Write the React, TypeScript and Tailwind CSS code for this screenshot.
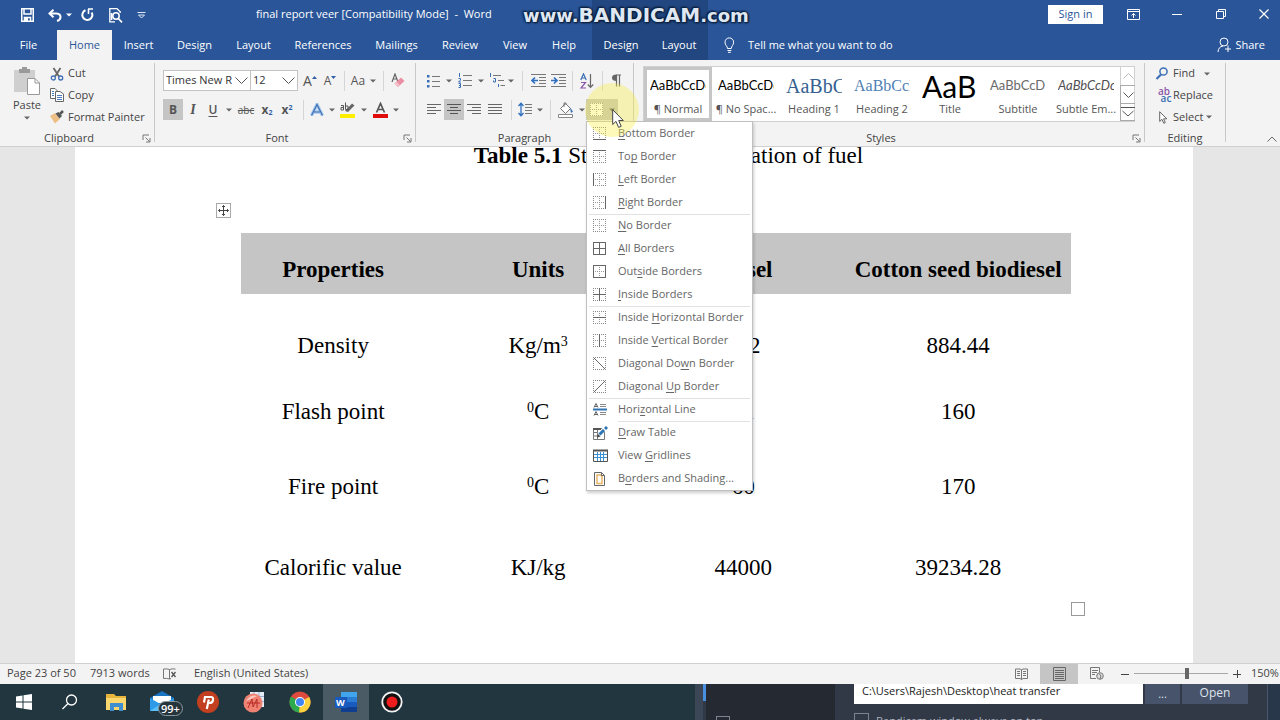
import type { ReactNode } from 'react';

const ui = "font-['Open_Sans','Noto_Sans',sans-serif]";

const TABS = [
  { label: 'File', width: 'w-[57px]' },
  { label: 'Home', width: 'w-[55px]', active: true },
  { label: 'Insert', width: 'w-[53px]' },
  { label: 'Design', width: 'w-[59px]' },
  { label: 'Layout', width: 'w-[59px]' },
  { label: 'References', width: 'w-[80px]' },
  { label: 'Mailings', width: 'w-[67px]' },
  { label: 'Review', width: 'w-[60px]' },
  { label: 'View', width: 'w-[50px]' },
  { label: 'Help', width: 'w-[48px]' },
];

const TABLE_TABS = ['Design', 'Layout'];

const STYLES = [
  { name: '¶ Normal', sample: 'AaBbCcDc', look: "font-['Lato'] text-[13px] text-black", selected: true },
  { name: '¶ No Spac...', sample: 'AaBbCcDc', look: "font-['Lato'] text-[13px] text-black" },
  { name: 'Heading 1', sample: 'AaBbC', look: "font-['Liberation_Serif'] text-[20px] text-[#365f91]" },
  { name: 'Heading 2', sample: 'AaBbCcI', look: "font-['Liberation_Serif'] text-[16px] text-[#4f7fb5]" },
  { name: 'Title', sample: 'AaB', look: "font-['Lato'] text-[30px] text-black" },
  { name: 'Subtitle', sample: 'AaBbCcD', look: "font-['Lato'] text-[13px] text-[#6a6a6a]" },
  { name: 'Subtle Em...', sample: 'AaBbCcDc', look: "font-['Lato'] text-[13px] italic text-[#505050]" },
];

// before / accelerator / after, plus the solid strokes of the icon
const MENU = [
  { text: ['', 'B', 'ottom Border'], solid: 'M0 12.5H13' },
  { text: ['To', 'p', ' Border'], solid: 'M0 0.5H13' },
  { text: ['', 'L', 'eft Border'], solid: 'M0.5 0V13' },
  { text: ['', 'R', 'ight Border'], solid: 'M12.5 0V13' },
  { text: ['', 'N', 'o Border'], solid: '', rule: 'full' },
  { text: ['', 'A', 'll Borders'], solid: 'M0.5 0.5H12.5V12.5H0.5ZM6.5 0.5V12.5M0.5 6.5H12.5' },
  { text: ['Out', 's', 'ide Borders'], solid: 'M0.5 0.5H12.5V12.5H0.5Z' },
  { text: ['', 'I', 'nside Borders'], solid: 'M6.5 0V13M0 6.5H13' },
  { text: ['Inside ', 'H', 'orizontal Border'], solid: 'M0 6.5H13', rule: 'full' },
  { text: ['Inside ', 'V', 'ertical Border'], solid: 'M6.5 0V13' },
  { text: ['Diagonal Do', 'w', 'n Border'], solid: 'M1 1L12 12', diagonal: true },
  { text: ['Diagonal ', 'U', 'p Border'], solid: 'M1 12L12 1', diagonal: true },
  { text: ['Hori', 'z', 'ontal Line'], icon: 'hline', rule: 'full' },
  { text: ['', 'D', 'raw Table'], icon: 'draw', rule: 'inset' },
  { text: ['View ', 'G', 'ridlines'], icon: 'grid' },
  { text: ['B', 'o', 'rders and Shading...'], icon: 'page' },
];

const ROWS = [
  { name: 'Density', unit: <>Kg/m<sup className="text-[14px]">3</sup></>, diesel: '832', cotton: '884.44', height: 'h-[66px]' },
  { name: 'Flash point', unit: <><sup className="text-[14px]">0</sup>C</>, diesel: '51', cotton: '160', height: 'h-[75px]' },
  { name: 'Fire point', unit: <><sup className="text-[14px]">0</sup>C</>, diesel: '60', cotton: '170', height: 'h-[81px]' },
  { name: 'Calorific value', unit: 'KJ/kg', diesel: '44000', cotton: '39234.28', height: 'h-[86px]' },
];

function Icon({ w = 16, h = 16, children }: { w?: number; h?: number; children: ReactNode }) {
  return (
    <svg width={w} height={h} viewBox={`0 0 ${w} ${h}`} fill="none" className="shrink-0" aria-hidden="true">
      {children}
    </svg>
  );
}

function Caret() {
  return (
    <Icon w={6} h={4}>
      <path d="M0 0.5H6L3 3.5Z" fill="#666" />
    </Icon>
  );
}

function Tool({ label, width = 'w-5', active, children }: { label: string; width?: string; active?: boolean; children: ReactNode }) {
  return (
    <button
      aria-label={label}
      className={`flex h-[21px] shrink-0 items-center justify-center leading-none text-[#555] ${width} ${active ? 'bg-[#c5c5c5]' : ''}`}
    >
      {children}
    </button>
  );
}

function Sep({ width = 'w-2' }: { width?: string }) {
  return (
    <div className={`flex h-5 shrink-0 justify-center ${width}`}>
      <div className="w-px bg-[#d5d5d5]" />
    </div>
  );
}

function Group({ title, width, launcher, children }: { title: string; width: string; launcher?: boolean; children: ReactNode }) {
  return (
    <section className={`flex shrink-0 flex-col ${width}`}>
      <div className="flex flex-1">
        <div className="flex min-w-0 flex-1 flex-col">
          <div className="flex-1">{children}</div>
          <div className="flex h-4 items-center">
            <span className="flex-1 text-center leading-4 text-[#444]">{title}</span>
            {launcher && (
              <button aria-label={`${title} settings`} className="flex w-4 justify-center">
                <Icon w={9} h={9}>
                  <path d="M1 6V1H7M3.5 3.5L7.5 7.5M8 4V8H4" stroke="#777" />
                </Icon>
              </button>
            )}
          </div>
        </div>
        <div className="mt-[3px] mb-1 w-px bg-[#c8c8c8]" />
      </div>
    </section>
  );
}

function MenuIcon({ item }: { item: (typeof MENU)[number] }) {
  if (item.icon === 'hline') {
    return (
      <Icon w={14} h={13}>
        <path d="M0 6.5H14" stroke="#2e75b6" strokeWidth="2" />
        <path d="M1 4.5L3 0.5L5 4.5M2 3.5H4M1 12.5L3 8.5L5 12.5M2 11.5H4" stroke="#666" />
        <path d="M7 1.5H13M7 3.5H13M7 9.5H13M7 11.5H13" stroke="#888" />
      </Icon>
    );
  }
  if (item.icon === 'draw') {
    return (
      <Icon w={15} h={14}>
        <path d="M0.5 2.5H11.5V13.5H0.5ZM0.5 6.5H6M4.5 3V13M0.5 10H4" stroke="#777" />
        <path d="M0 3H8" stroke="#555" strokeWidth="2" />
        <path d="M6 8.5L13 1.5" stroke="#fff" strokeWidth="4" />
        <path d="M6.5 8.5L11 4" stroke="#2e75b6" strokeWidth="3" />
        <path d="M12 3L14 1" stroke="#2e75b6" strokeWidth="3" />
        <path d="M4 11.5L5 8L7.5 10.5Z" fill="#444" />
      </Icon>
    );
  }
  if (item.icon === 'grid') {
    return (
      <Icon w={15} h={13}>
        <path d="M4.5 3V12M7.5 3V12M10.5 3V12M1 5.5H14M1 8.5H14" stroke="#3a90d4" />
        <path d="M0.5 1.5H14.5V12.5H0.5Z" stroke="#555" />
        <path d="M0 1.5H15" stroke="#555" strokeWidth="2" />
      </Icon>
    );
  }
  if (item.icon === 'page') {
    return (
      <Icon w={13} h={14}>
        <path d="M1.5 0.5H8.5L11.5 3.5V13.5H1.5Z" fill="#fff" stroke="#666" />
        <path d="M4 3H7.5L9 4.5V11.5H4Z" stroke="#e8b565" strokeWidth="1.5" />
        <path d="M8.5 0.5V3.5H11.5" stroke="#666" />
      </Icon>
    );
  }
  return (
    <Icon w={13} h={13}>
      <path d="M0 0.5H13M0 12.5H13M0.5 0V13M12.5 0V13" stroke="#888" strokeDasharray="1 1" />
      {!item.diagonal && <path d="M6.5 0V13M0 6.5H13" stroke="#999" strokeDasharray="1 1" />}
      <path d={item.solid} stroke="#666" />
    </Icon>
  );
}

function BordersMenu() {
  return (
    <ul role="menu" className="absolute top-[22px] left-0 z-20 w-[167px] border border-[#c0c0c0] bg-white shadow-[1px_2px_3px_rgba(0,0,0,0.2)]">
      {MENU.map(item => (
        <li key={item.text.join('')} role="none" className="relative">
          {item.rule && <div className={`absolute top-0 right-0.5 h-px bg-[#e1e1e1] ${item.rule === 'inset' ? 'left-[31px]' : 'left-0.5'}`} />}
          <button role="menuitem" className="flex h-[23px] w-full items-center pl-[6px] text-left whitespace-nowrap text-[#666]">
            <span className="flex w-[25px]">
              <MenuIcon item={item} />
            </span>
            <span>
              {item.text[0]}
              <span className="underline underline-offset-2">{item.text[1]}</span>
              {item.text[2]}
            </span>
          </button>
        </li>
      ))}
    </ul>
  );
}

function Pointer() {
  return (
    <>
      <div className="pointer-events-none absolute -top-4 -left-px z-30 h-[54px] w-[54px] rounded-full bg-[#f5ee3c]/35" />
      <svg width="14" height="20" viewBox="0 0 14 20" className="pointer-events-none absolute top-[10px] left-[26px] z-40" aria-hidden="true">
        <path d="M0.7 0.7V15.5L4 12.4L6.6 18.4L9.2 17.3L6.7 11.5H11.3Z" fill="#fff" stroke="#444" />
      </svg>
    </>
  );
}

function TitleBar() {
  return (
    <div className="relative z-10 flex h-[30px] items-center text-white">
      <div className="flex w-[256px] items-center pl-[21px]">
        <button aria-label="Save" className="w-[27px]">
          <Icon w={13} h={14}>
            <path d="M0.75 0.75H12.25V13.25H0.75Z" stroke="#fff" strokeWidth="1.5" />
            <path d="M3 1V6H10V1M3.5 13V9.5H9.5V13" stroke="#fff" strokeWidth="1.5" />
            <path d="M4 10H7V13H4Z" fill="#fff" />
          </Icon>
        </button>
        <button aria-label="Undo" className="flex w-[33px] items-center gap-1">
          <Icon w={14} h={13}>
            <path d="M1.5 4.5H8.5Q12.5 4.8 12.5 8Q12.5 11 9 12" stroke="#fff" strokeWidth="2" />
            <path d="M5.5 0.8L1.5 4.5L5.5 8.2" stroke="#fff" strokeWidth="2" />
          </Icon>
          <Icon w={6} h={4}>
            <path d="M0 0.5H6L3 3.5Z" fill="#fff" />
          </Icon>
        </button>
        <button aria-label="Redo" className="w-[28px]">
          <Icon w={13} h={14}>
            <path d="M4.5 2.3A5 5 0 1 0 10.7 4.5" stroke="#fff" strokeWidth="2" />
            <path d="M7 1H12M7.5 1V6" stroke="#fff" strokeWidth="1.6" />
          </Icon>
        </button>
        <button aria-label="Print preview" className="w-[28px]">
          <Icon w={14} h={15}>
            <path d="M11.2 5V3.8L8 0.7H0.8V13.8H6" stroke="#fff" strokeWidth="1.3" />
            <circle cx="7" cy="8" r="3.2" stroke="#fff" strokeWidth="1.5" />
            <path d="M9.3 10.5L13 14.3M2.5 5V12" stroke="#fff" strokeWidth="1.7" />
          </Icon>
        </button>
        <button aria-label="Customize toolbar">
          <Icon w={9} h={7}>
            <path d="M0.5 0.5H8.5M1.5 3L4.5 6L7.5 3Z" stroke="#dfe8f5" />
          </Icon>
        </button>
      </div>
      <h1 className="w-[267px] pb-0.5 text-[11px] whitespace-pre">final report veer [Compatibility Mode]  -  Word</h1>
      <div className="flex flex-1">
        <p className="font-['DejaVu_Sans'] text-[18px] leading-[28px] font-bold whitespace-nowrap text-[#dfe8f2] [text-shadow:0_0_2px_#0a1c38,0_0_3px_#0a1c38,1px_1px_2px_#0a1c38,-1px_-1px_2px_#0a1c38]">
          www.<span className="text-[20px]">BANDICAM</span>.com
        </p>
      </div>
      <button className="mb-0.5 h-[19px] w-[55px] bg-white text-[#2b579a]">Sign in</button>
      <div className="flex items-center pb-0.5 pl-2">
        <button aria-label="Ribbon display options" className="flex w-11 justify-center">
          <Icon w={13} h={11}>
            <path d="M0.5 0.5H12.5V10.5H0.5ZM0.5 2.5H12.5M6.5 9V4.5M4.5 6.5L6.5 4.5L8.5 6.5" stroke="#fff" />
          </Icon>
        </button>
        <button aria-label="Minimize" className="flex w-11 justify-center">
          <Icon w={10} h={10}>
            <path d="M0 5.5H10" stroke="#fff" />
          </Icon>
        </button>
        <button aria-label="Restore" className="flex w-11 justify-center">
          <Icon w={10} h={10}>
            <path d="M0.5 2.5H7.5V9.5H0.5ZM2.5 2.5V0.5H9.5V7.5H7.5" stroke="#fff" />
          </Icon>
        </button>
        <button aria-label="Close" className="flex w-[37px] justify-end pr-[11px]">
          <Icon w={10} h={10}>
            <path d="M0.5 0.5L9.5 9.5M9.5 0.5L0.5 9.5" stroke="#fff" strokeWidth="1.2" />
          </Icon>
        </button>
      </div>
    </div>
  );
}

function TabRow() {
  return (
    <nav className="flex h-[30px] items-stretch text-white">
      <div className="flex pr-1">
        {TABS.map(tab => (
          <button
            key={tab.label}
            className={`${tab.width} ${tab.active ? 'bg-[#f3f3f3] text-[#2b579a]' : ''}`}
          >
            {tab.label}
          </button>
        ))}
      </div>
      <div className="-mt-[30px] flex bg-[#224780] pt-[30px]">
        {TABLE_TABS.map(tab => (
          <button key={tab} className="w-[58px]">
            {tab}
          </button>
        ))}
      </div>
      <button className="flex items-center gap-3 pl-[15px]">
        <Icon w={13} h={16}>
          <path d="M4.5 11.5C4.5 9 2 8.5 2 5.2A4.3 4.3 0 0 1 10.6 5.2C10.6 8.5 8.3 9 8.3 11.5ZM4.5 13.5H8.3M5 15.3H7.8" stroke="#fff" />
        </Icon>
        <span>Tell me what you want to do</span>
      </button>
      <button className="ml-auto flex items-center gap-[3px] pr-[15px]">
        <Icon w={15} h={16}>
          <circle cx="7" cy="5" r="4" stroke="#fff" />
          <path d="M1 15Q1.5 9.5 6 9M11 8.5V15M8 12H14" stroke="#fff" />
        </Icon>
        <span>Share</span>
      </button>
    </nav>
  );
}

function ClipboardGroup() {
  return (
    <Group title="Clipboard" width="w-[155px]" launcher>
      <div className="flex pt-[3px]">
        <button className="flex w-[50px] flex-col items-center pt-1 pl-1 text-[#444]">
          <Icon w={28} h={28}>
            <path d="M1 3H22V25H1Z" fill="#cfcfcf" />
            <path d="M6 2H17V6H6ZM9 0H14V3H9Z" fill="#9a9a9a" />
            <path d="M14.5 11.5H22L26.5 16V27.5H14.5Z" fill="#fff" stroke="#999" />
            <path d="M22 11.5V16H26.5" stroke="#999" />
          </Icon>
          <span className="leading-[19px]">Paste</span>
          <span className="flex h-2 items-center"><Caret /></span>
        </button>
        <div className="flex flex-col text-[#444]">
          <button className="flex h-[21px] items-center gap-1">
            <Icon w={14} h={14}>
              <path d="M3.5 1L9 9.5M10.5 1L5 9.5" stroke="#666" strokeWidth="1.8" />
              <circle cx="3.3" cy="11" r="2" stroke="#3f6fb5" strokeWidth="1.3" />
              <circle cx="10.7" cy="11" r="2" stroke="#3f6fb5" strokeWidth="1.3" />
            </Icon>
            Cut
          </button>
          <button className="flex h-[22px] items-center gap-1">
            <Icon w={14} h={14}>
              <path d="M0.5 0.5H5L7.5 3V10.5H0.5Z" fill="#fff" stroke="#666" />
              <path d="M5.5 3.5H10L13.5 6V13.5H5.5Z" fill="#fff" stroke="#666" />
              <path d="M2 3.5H4M2 5.5H4M2 7.5H4M7 7.5H12M7 9.5H12M7 11.5H12" stroke="#4a7abf" />
            </Icon>
            Copy
          </button>
          <button className="flex h-[22px] items-center gap-1 whitespace-nowrap">
            <Icon w={14} h={14}>
              <path d="M0 6L5 3L10 9L5 13.5Z" fill="#ecc084" />
              <path d="M5.5 3.5L9.5 8.5L12 6L8.5 2Z" fill="#555" />
              <path d="M10 4L13 1" stroke="#555" strokeWidth="2.5" />
            </Icon>
            Format Painter
          </button>
        </div>
      </div>
    </Group>
  );
}

function DropBox({ label, value, width }: { label: string; value: string; width: string }) {
  return (
    <div className={`flex h-[21px] items-center border border-[#c3c3c3] bg-white ${width}`}>
      <select aria-label={label} className="min-w-0 flex-1 appearance-none overflow-hidden pl-0.5 text-clip text-[#333] outline-none">
        <option>{value}</option>
      </select>
      <span className="flex w-[18px] justify-center">
        <Icon w={13} h={7}>
          <path d="M0.5 0.5L6.5 6.5L12.5 0.5" stroke="#555" />
        </Icon>
      </span>
    </div>
  );
}

function FontGroup() {
  return (
    <Group title="Font" width="w-[261px]" launcher>
      <div className="flex flex-col gap-2 pt-[10px] pl-2">
        <div className="flex items-center">
          <DropBox label="Font" value="Times New Roman" width="w-[88px]" />
          <div className="mr-0.5 -ml-px">
            <DropBox label="Font size" value="12" width="w-[48px]" />
          </div>
          <Tool label="Grow font">
            <span className="text-[14px]">A</span>
            <Icon w={5} h={12}><path d="M0 4L2.5 1L5 4Z" fill="#2e5fa8" /></Icon>
          </Tool>
          <Tool label="Shrink font">
            <span className="text-[12px]">A</span>
            <Icon w={5} h={12}><path d="M0 1L2.5 4L5 1Z" fill="#2e5fa8" /></Icon>
          </Tool>
          <Sep />
          <Tool label="Change case"><span className="text-[12px]">Aa</span></Tool>
          <Tool label="Change case options" width="w-[10px]"><Caret /></Tool>
          <Sep width="w-[10px]" />
          <Tool label="Clear formatting">
            <Icon w={14} h={15}>
              <path d="M1 9L4 1L7 9M2 6H6" stroke="#666" strokeWidth="1.2" />
              <path d="M3.5 10.5L10 4.5L13.5 8L7 14Z" fill="#ea8fa3" />
              <path d="M3.5 10.5L5.5 8.6L9 12.2L7 14Z" fill="#f5bfca" />
            </Icon>
          </Tool>
        </div>
        <div className="flex items-center">
          <Tool label="Bold" active><span className="text-[12px] font-bold">B</span></Tool>
          <Tool label="Italic"><span className="font-['Liberation_Serif'] text-[14px] font-bold italic">I</span></Tool>
          <Tool label="Underline"><span className="text-[12px] font-semibold underline underline-offset-2">U</span></Tool>
          <Tool label="Underline options" width="w-3"><Caret /></Tool>
          <Tool label="Strikethrough" width="w-[22px]"><span className="text-[10px] line-through">abc</span></Tool>
          <Tool label="Subscript"><span className="text-[12px] font-bold">x<sub className="text-[7px] text-[#2e5fa8]">2</sub></span></Tool>
          <Tool label="Superscript"><span className="text-[12px] font-bold">x<sup className="text-[7px] text-[#2e5fa8]">2</sup></span></Tool>
          <Sep width="w-3" />
          <Tool label="Text effects" width="w-4">
            <Icon w={14} h={14}>
              <path d="M1.5 12.5L7 1.5L12.5 12.5M4 9H10" stroke="#a9c8ec" strokeWidth="3.4" />
              <path d="M1.5 12.5L7 1.5L12.5 12.5M4 9H10" stroke="#3a6fb5" strokeWidth="1.2" />
            </Icon>
          </Tool>
          <Tool label="Text effect options" width="w-[14px]"><Caret /></Tool>
          <Tool label="Highlight" width="w-[18px]">
            <Icon w={16} h={16}>
              <path d="M5 9L12 1.5L14.5 3.5L8 10Z" fill="#666" />
              <path d="M0 12H15V16H0Z" fill="#ffee00" />
              <path d="M1 3.5H3.5V8H1V5.5H3.5M5.5 0.5V7.5H8V4H5.5" stroke="#555" />
            </Icon>
          </Tool>
          <Tool label="Highlight color" width="w-[14px]"><Caret /></Tool>
          <Tool label="Font color" width="w-[18px]">
            <Icon w={15} h={16}>
              <path d="M3.5 10.5L7.5 1.5L11.5 10.5M5 7.5H10" stroke="#555" strokeWidth="1.7" />
              <path d="M0 12H15V16H0Z" fill="#e00b0b" />
            </Icon>
          </Tool>
          <Tool label="Font color options" width="w-[14px]"><Caret /></Tool>
        </div>
      </div>
    </Group>
  );
}

function ParagraphGroup() {
  return (
    <Group title="Paragraph" width="w-[218px]">
      <div className="flex flex-col gap-2 pt-[10px] pl-2">
        <div className="flex items-center">
          <Tool label="Bullets" width="w-[18px]">
            <Icon w={13} h={14}>
              <path d="M0 1H2.5V3.5H0ZM0 6H2.5V8.5H0ZM0 11H2.5V13.5H0Z" fill="#3a6fb5" />
              <path d="M5 2.5H13M5 7.5H13M5 12.5H13" stroke="#777" />
            </Icon>
          </Tool>
          <Tool label="Bullet options" width="w-[14px]"><Caret /></Tool>
          <Tool label="Numbering" width="w-[18px]">
            <Icon w={14} h={15}>
              <path d="M1.5 0V4M0.5 5.5H2.5V7L0.5 9H3M0.5 10.5H2.5V14.5H0.5M1 12.5H2.5" stroke="#3a6fb5" />
              <path d="M5 2.5H14M5 7.5H14M5 12.5H14" stroke="#777" />
            </Icon>
          </Tool>
          <Tool label="Numbering options" width="w-[14px]"><Caret /></Tool>
          <Tool label="Multilevel list" width="w-[18px]">
            <Icon w={16} h={15}>
              <path d="M1.5 0V4M4.5 5.5H6.5V9H4.5V7.5M9.5 11V14" stroke="#3a6fb5" />
              <path d="M4 2.5H12M9 7.5H15M11.5 12.5H16" stroke="#777" />
            </Icon>
          </Tool>
          <Tool label="Multilevel options" width="w-[10px]"><Caret /></Tool>
          <Sep width="w-3" />
          <Tool label="Decrease indent">
            <Icon w={15} h={13}>
              <path d="M0 0.5H15M8 3.5H15M8 6.5H15M8 9.5H15M0 12.5H15" stroke="#777" />
              <path d="M1 6.5H7M4 3.5L1 6.5L4 9.5" stroke="#2e6fc0" strokeWidth="1.7" />
            </Icon>
          </Tool>
          <Tool label="Increase indent">
            <Icon w={15} h={13}>
              <path d="M0 0.5H15M8 3.5H15M8 6.5H15M8 9.5H15M0 12.5H15" stroke="#777" />
              <path d="M0 6.5H6M3 3.5L6 6.5L3 9.5" stroke="#2e6fc0" strokeWidth="1.7" />
            </Icon>
          </Tool>
          <Sep />
          <Tool label="Sort" width="w-[22px]">
            <Icon w={14} h={16}>
              <path d="M0.8 7L3.5 0.8L6.2 7M1.5 5H5.5" stroke="#3a6fb5" strokeWidth="1.2" />
              <path d="M1 9.5H5.5L1 15H6" stroke="#8a57a8" strokeWidth="1.2" />
              <path d="M10.5 1V14M7.8 11.5L10.5 14.3L13.2 11.5" stroke="#666" strokeWidth="1.2" />
            </Icon>
          </Tool>
          <Sep />
          <Tool label="Show formatting marks">
            <Icon w={11} h={13}>
              <path d="M5 1H10M5.5 1V12.5M8.5 1V12.5" stroke="#666" strokeWidth="1.2" />
              <path d="M5.5 0.5Q1 0.5 1 3.7Q1 7 5.5 7Z" fill="#666" />
            </Icon>
          </Tool>
        </div>
        <div className="flex items-center">
          <Tool label="Align left">
            <Icon w={14} h={11}><path d="M0 0.5H14M0 3.5H9M0 6.5H14M0 9.5H9" stroke="#666" /></Icon>
          </Tool>
          <Tool label="Center" active>
            <Icon w={14} h={11}><path d="M0 0.5H14M3 3.5H11M0 6.5H14M3 9.5H11" stroke="#555" /></Icon>
          </Tool>
          <Tool label="Align right">
            <Icon w={14} h={11}><path d="M0 0.5H14M5 3.5H14M0 6.5H14M5 9.5H14" stroke="#666" /></Icon>
          </Tool>
          <Tool label="Justify" width="w-[22px]">
            <Icon w={14} h={11}><path d="M0 0.5H14M0 3.5H14M0 6.5H14M0 9.5H14" stroke="#666" /></Icon>
          </Tool>
          <Sep width="w-[10px]" />
          <Tool label="Line spacing" width="w-[18px]">
            <Icon w={14} h={15}>
              <path d="M3 1.5V13.5M0.5 4L3 1.2L5.5 4M0.5 11L3 13.8L5.5 11" stroke="#2e6fc0" strokeWidth="1.3" />
              <path d="M7 2.5H14M7 5.5H14M7 8.5H14M7 11.5H14" stroke="#777" />
            </Icon>
          </Tool>
          <Tool label="Line spacing options" width="w-[11px]"><Caret /></Tool>
          <Sep width="w-[10px]" />
          <Tool label="Shading" width="w-[22px]">
            <Icon w={16} h={16}>
              <path d="M2.5 6.5L7.5 1.5L12.5 6.5L7.5 11.5Z" fill="#fff" stroke="#777" />
              <path d="M6 5V1H8V3" stroke="#777" />
              <path d="M12 5.5L15 9.5L13 11Z" fill="#3a6fb5" />
              <path d="M0.5 12.5H14.5V15.5H0.5Z" fill="#fff" stroke="#888" />
            </Icon>
          </Tool>
          <Tool label="Shading options" width="w-[9px]"><Caret /></Tool>
          <div className="relative flex">
            <Tool label="Borders" active>
              <Icon w={13} h={13}>
                <path d="M0 0H13V13H0Z" fill="#fff" />
                <path d="M0 0.5H13M0 6.5H13M0 12.5H13M0.5 0V13M6.5 0V13M12.5 0V13" stroke="#999" strokeDasharray="1 1" />
              </Icon>
            </Tool>
            <Tool label="Border options" width="w-3" active><Caret /></Tool>
            <BordersMenu />
            <Pointer />
          </div>
        </div>
      </div>
    </Group>
  );
}

function StylesGroup() {
  return (
    <Group title="Styles" width="w-[511px]" launcher>
      <div className="px-[9px] pt-[6px]">
        <div className="flex h-[56px] border border-[#d0d0d0] bg-white">
          {STYLES.map(style => (
            <button
              key={style.name}
              className={`flex w-[68px] shrink-0 flex-col items-center border-[3px] ${style.selected ? 'border-[#c6c6c6]' : 'border-transparent'}`}
            >
              <span className={`flex h-[31px] w-[56px] items-center overflow-hidden leading-none whitespace-nowrap ${style.look}`}>{style.sample}</span>
              <span className="h-[16px] leading-[16px] whitespace-nowrap text-[#555]">{style.name}</span>
            </button>
          ))}
          <div className="flex flex-1 flex-col">
            <button aria-label="Previous styles" className="flex h-[18px] items-center justify-center border-l border-[#d0d0d0]">
              <Icon w={11} h={6}><path d="M0.5 5.5L5.5 0.5L10.5 5.5" stroke="#bbb" /></Icon>
            </button>
            <button aria-label="Next styles" className="flex h-[19px] items-center justify-center border border-r-0 border-[#aaa]">
              <Icon w={11} h={6}><path d="M0.5 0.5L5.5 5.5L10.5 0.5" stroke="#555" /></Icon>
            </button>
            <button aria-label="More styles" className="flex flex-1 flex-col items-center justify-center gap-1 border border-t-0 border-r-0 border-[#aaa]">
              <Icon w={14} h={10}><path d="M0 0.5H14M1.5 4L7 9L12.5 4" stroke="#555" /></Icon>
            </button>
          </div>
        </div>
      </div>
    </Group>
  );
}

function EditingGroup() {
  return (
    <Group title="Editing" width="w-[81px]">
      <div className="flex flex-col pt-[3px] pl-[10px] text-[#444]">
        <button className="flex h-[21px] items-center">
          <span className="w-[18px]">
            <Icon w={14} h={13}>
              <circle cx="8.5" cy="4.5" r="3.6" stroke="#3a6fb5" strokeWidth="1.5" />
              <path d="M6 7.5L1.5 12" stroke="#3a6fb5" strokeWidth="2.2" />
            </Icon>
          </span>
          Find
          <span className="pl-[9px]"><Caret /></span>
        </button>
        <button className="flex h-[22px] items-center">
          <span className="flex w-[18px] flex-col text-[10px] leading-[7px] font-semibold">
            <span className="text-[#8a57a8]">ab</span>
            <span className="pl-1 text-[#3a6fb5]">ac</span>
          </span>
          Replace
        </button>
        <button className="flex h-[22px] items-center">
          <span className="w-[18px] pl-1">
            <Icon w={9} h={13}>
              <path d="M0.7 0.7V10.5L3 8.3L4.8 12.3L6.3 11.6L4.6 7.8H7.8Z" fill="#fff" stroke="#666" />
            </Icon>
          </span>
          Select
          <span className="pl-[3px]"><Caret /></span>
        </button>
      </div>
    </Group>
  );
}

function Document() {
  return (
    <main className="flex-1 overflow-hidden bg-[#e6e6e6] pr-[87px] pl-[75px] font-['Liberation_Serif','Times_New_Roman',serif] text-[23px] leading-[28px] text-black">
      <div className="h-full bg-white pr-[108px] pl-[141px]">
        <p className="h-[56px] pl-[36px] text-center leading-[18px] whitespace-nowrap">
          <b>Table 5.1</b> Standard &amp; specification of fuel
        </p>
        <button aria-label="Move table" className="flex h-[15px] w-[15px] items-center justify-center border border-[#aaa] bg-white">
          <Icon w={11} h={11}>
            <path d="M5.5 0.5V10.5M0.5 5.5H10.5M4 2L5.5 0.5L7 2M4 9L5.5 10.5L7 9M2 4L0.5 5.5L2 7M9 4L10.5 5.5L9 7" stroke="#444" />
          </Icon>
        </button>
        <div className="pt-[15px] pr-[14px] pl-[25px]">
          <table className="w-full table-fixed border-collapse text-center">
            <colgroup>
              <col className="w-[22.2%]" />
              <col className="w-[27.2%]" />
              <col className="w-[22.2%]" />
              <col />
            </colgroup>
            <thead className="bg-[#c5c5c5]">
              <tr className="h-[61px] align-top">
                <th className="pt-[23px]">Properties</th>
                <th className="pt-[23px]">Units</th>
                <th className="pt-[23px]">Diesel</th>
                <th className="pt-[23px] pl-2.5 whitespace-nowrap">Cotton seed biodiesel</th>
              </tr>
            </thead>
            <tbody>
              {ROWS.map(row => (
                <tr key={row.name} className={`align-top ${row.height}`}>
                  <td className="pt-[38px]">{row.name}</td>
                  <td className="pt-[38px]">{row.unit}</td>
                  <td className="pt-[38px]">{row.diesel}</td>
                  <td className="pt-[38px] pl-2.5">{row.cotton}</td>
                </tr>
              ))}
            </tbody>
          </table>
        </div>
        <div className="flex justify-end">
          <button aria-label="Resize table" className="h-[14px] w-[14px] border border-[#999] bg-white" />
        </div>
      </div>
    </main>
  );
}

function StatusBar() {
  return (
    <footer className="flex h-[21px] shrink-0 items-center border-t border-[#d0d0d0] bg-[#f3f3f3] pb-px text-[11px] text-[#444]">
      <span className="w-[90px] pl-[7px]">Page 23 of 50</span>
      <span className="w-[73px]">7913 words</span>
      <button aria-label="Proofing" className="w-[31px]">
        <Icon w={14} h={12}>
          <path d="M6.5 1.5Q4 0.5 0.5 1V10.5Q4 10 6.5 11ZM6.5 1.5Q9 0.5 12.5 1M6.5 11L8 10.5" stroke="#777" />
          <path d="M8.5 4L12.5 9M12.5 4L8.5 9" stroke="#555" strokeWidth="1.3" />
        </Icon>
      </button>
      <span>English (United States)</span>
      <div className="ml-auto flex h-full items-center">
        <button aria-label="Read mode" className="flex w-[38px] justify-center">
          <Icon w={13} h={12}>
            <path d="M6.5 1.5V11.5M0.5 1H5L6.5 2L8 1H12.5V10.5H8L6.5 11.5L5 10.5H0.5ZM2 3.5H5M2 5.5H5M2 7.5H5M8 3.5H11M8 5.5H11M8 7.5H11" stroke="#777" />
          </Icon>
        </button>
        <button aria-label="Print layout" className="flex h-[20px] w-[38px] items-center justify-center bg-[#c5c5c5]">
          <Icon w={13} h={14}>
            <path d="M0.5 0.5H12.5V13.5H0.5ZM2 3.5H11M2 5.5H11M2 7.5H11M2 9.5H11M2 11.5H11" stroke="#666" />
          </Icon>
        </button>
        <button aria-label="Web layout" className="flex w-[38px] justify-center">
          <Icon w={14} h={13}>
            <path d="M6 11.5H0.5V0.5H9.5V5M2 3.5H8M2 5.5H7M2 7.5H5" stroke="#777" />
            <circle cx="10" cy="9" r="3.3" fill="#ddd" stroke="#777" />
            <path d="M9 6.5L11 9L10 12" stroke="#777" />
          </Icon>
        </button>
        <button aria-label="Zoom out" className="flex w-[18px] justify-center">
          <Icon w={8} h={8}><path d="M0 4.5H8" stroke="#444" /></Icon>
        </button>
        <input
          type="range"
          aria-label="Zoom"
          min={10}
          max={500}
          defaultValue={287}
          className="h-3 w-[94px] appearance-none bg-[linear-gradient(#a8a8a8,#a8a8a8)] bg-[length:100%_1px] bg-center bg-no-repeat [&::-webkit-slider-thumb]:h-[11px] [&::-webkit-slider-thumb]:w-1 [&::-webkit-slider-thumb]:appearance-none [&::-webkit-slider-thumb]:bg-[#666]"
        />
        <button aria-label="Zoom in" className="flex w-[17px] justify-center">
          <Icon w={8} h={8}><path d="M0 4.5H8M4.5 0V8" stroke="#444" /></Icon>
        </button>
        <span className="w-[35px] pl-[6px] whitespace-nowrap">150%</span>
      </div>
    </footer>
  );
}

function TaskButton({ label, active, children }: { label: string; active?: boolean; children: ReactNode }) {
  return (
    <button aria-label={label} className={`flex h-full w-[46px] shrink-0 items-center justify-center ${active ? 'bg-[#4b5b66]' : ''}`}>
      {children}
    </button>
  );
}

function Taskbar() {
  return (
    <div className="flex h-9 shrink-0 overflow-hidden bg-[#21363f]">
      <div className="flex flex-1 pl-px">
        <TaskButton label="Start">
          <Icon w={16} h={16}>
            <path d="M0 2.5L6.5 1.5V7.5H0ZM7.5 1.3L16 0V7.5H7.5ZM0 8.5H6.5V14.5L0 13.5ZM7.5 8.5H16V16L7.5 14.7Z" fill="#fff" />
          </Icon>
        </TaskButton>
        <TaskButton label="Search">
          <Icon w={16} h={16}>
            <circle cx="9.5" cy="6" r="5" stroke="#fff" strokeWidth="1.3" />
            <path d="M6 9.5L0.5 15" stroke="#fff" strokeWidth="1.3" />
          </Icon>
        </TaskButton>
        <TaskButton label="File Explorer">
          <Icon w={21} h={18}>
            <path d="M0 1H8L10 3H20V17H0Z" fill="#e9b43c" />
            <path d="M0 5H20V17H0Z" fill="#fbd66c" />
            <path d="M4 10H17V18H13V14H8V18H4Z" fill="#3f8fd0" />
          </Icon>
        </TaskButton>
        <TaskButton label="Mail">
          <span className="relative">
            <Icon w={24} h={22}>
              <path d="M0 7L12 0L24 7V20H0Z" fill="#1a74c4" />
              <path d="M3 5H21V12H3Z" fill="#fff" />
              <path d="M0 7L12 14L24 7V20H0Z" fill="#2f9be8" />
              <path d="M0 20L12 12L14 20Z" fill="#5cc0f8" />
            </Icon>
            <span className="absolute top-[10px] left-2 rounded-full border border-[#8a979e] bg-[#26343c] px-0.5 text-[11px] leading-[13px] font-semibold text-white">99+</span>
          </span>
        </TaskButton>
        <TaskButton label="Psiphon">
          <Icon w={22} h={22}>
            <circle cx="11" cy="11" r="11" fill="#c2401f" />
            <path d="M7 11.5L8 6H14Q16.5 6 16 9Q15.5 12 12.5 12H10.5" stroke="#fff" strokeWidth="2.2" />
            <path d="M11.8 8.5L9.8 18" stroke="#fff" strokeWidth="2.2" />
          </Icon>
        </TaskButton>
        <TaskButton label="Data plot">
          <Icon w={22} h={22}>
            <path d="M7 1H21V16H7Z" fill="#e6ecf6" />
            <path d="M11 1V16M16 1V16M7 5.5H21M7 10.5H21" stroke="#9cb0d0" />
            <circle cx="10" cy="12" r="9.5" fill="#ef8273" />
            <path d="M3 10Q8 3 14 5Q9 8 3 10Z" fill="#fbc9c0" />
            <path d="M5 17L9 8L10 16L14 8V17M4 12H17" stroke="#b92d26" />
          </Icon>
        </TaskButton>
        <TaskButton label="Chrome">
          <Icon w={22} h={22}>
            <circle cx="11" cy="11" r="10.5" fill="#dd4b3e" />
            <path d="M11 11L1.9 5.75A10.5 10.5 0 0 0 11 21.5Z" fill="#2da94f" />
            <path d="M11 11L20.1 5.75A10.5 10.5 0 0 1 10 21.5Z" fill="#fdd23c" />
            <path d="M1.9 5.75L6.5 13.5L11 11Z" fill="#2da94f" />
            <path d="M20.1 5.75H11V11Z" fill="#dd4b3e" />
            <circle cx="11" cy="11" r="5" fill="#fff" />
            <circle cx="11" cy="11" r="4" fill="#4285f4" />
          </Icon>
        </TaskButton>
        <TaskButton label="Word" active>
          <span className="relative">
            <Icon w={22} h={20}>
              <path d="M6 0H22V5H6Z" fill="#41a5ee" />
              <path d="M6 5H22V10H6Z" fill="#2b7cd3" />
              <path d="M6 10H22V15H6Z" fill="#185abd" />
              <path d="M6 15H22V20H6Z" fill="#103f91" />
              <path d="M0 5H12V16H0Z" fill="#185abd" />
            </Icon>
            <span className="absolute top-[5px] left-px text-[9px] leading-[11px] font-bold text-white">W</span>
          </span>
        </TaskButton>
        <TaskButton label="Record">
          <Icon w={22} h={22}>
            <circle cx="11" cy="11" r="9.7" fill="#111" stroke="#f3f3f3" strokeWidth="1.8" />
            <circle cx="11" cy="11" r="5.5" fill="#ee1c1c" />
          </Icon>
        </TaskButton>
      </div>
      <div className="flex w-[585px] shrink-0 border-l-8 border-[#3b4656] bg-[#313846]">
        <div className="h-[17px] w-[3px] shrink-0 bg-[#4a90e2]" />
        <div className="w-[129px] shrink-0 bg-[#252932] pt-[32px] pl-[10px]">
          <input type="checkbox" aria-label="Recording option" className="block h-[14px] w-[14px] appearance-none border border-[#7c8492]" />
        </div>
        <div className="flex-1 pl-[19px] text-[#dfe3ea]">
          <div className="flex gap-0.5">
            <input
              aria-label="Output folder"
              defaultValue="C:\Users\Rajesh\Desktop\heat transfer"
              className="h-[20px] min-w-0 flex-1 bg-white pb-[7px] pl-2 text-[11px] text-[#222] outline-none"
            />
            <button className="h-[20px] w-[35px] bg-[#47536a]">...</button>
            <button className="h-[20px] w-[66px] bg-[#47536a] pb-1 text-[12px]">Open</button>
            <div className="w-[17px]" />
          </div>
          <label className="mt-[9px] flex items-start gap-[7px] leading-[16px] text-[#aeb5c1]">
            <input type="checkbox" className="block h-[15px] w-[15px] shrink-0 appearance-none border border-[#7c8492]" />
            Bandicam window always on top
          </label>
        </div>
        <div className="w-[13px] shrink-0 border-l border-[#4a5568] bg-[#28384a]" />
      </div>
    </div>
  );
}

export default function App() {
  return (
    <div className={`flex h-screen flex-col overflow-hidden bg-[#e6e6e6] text-[11px] ${ui}`}>
      <header className="shrink-0">
        <div className="bg-[#2a5699]">
          <TitleBar />
          <TabRow />
        </div>
        <div className="flex h-[87px] border-b border-[#cfcfcf] bg-[#f3f3f3]">
          <ClipboardGroup />
          <FontGroup />
          <ParagraphGroup />
          <StylesGroup />
          <EditingGroup />
          <div className="flex flex-1 items-end justify-end pr-[3px] pb-1">
            <button aria-label="Collapse ribbon">
              <Icon w={10} h={6}><path d="M0.5 5.5L5 1L9.5 5.5" stroke="#666" /></Icon>
            </button>
          </div>
        </div>
      </header>
      <Document />
      <StatusBar />
      <Taskbar />
    </div>
  );
}
